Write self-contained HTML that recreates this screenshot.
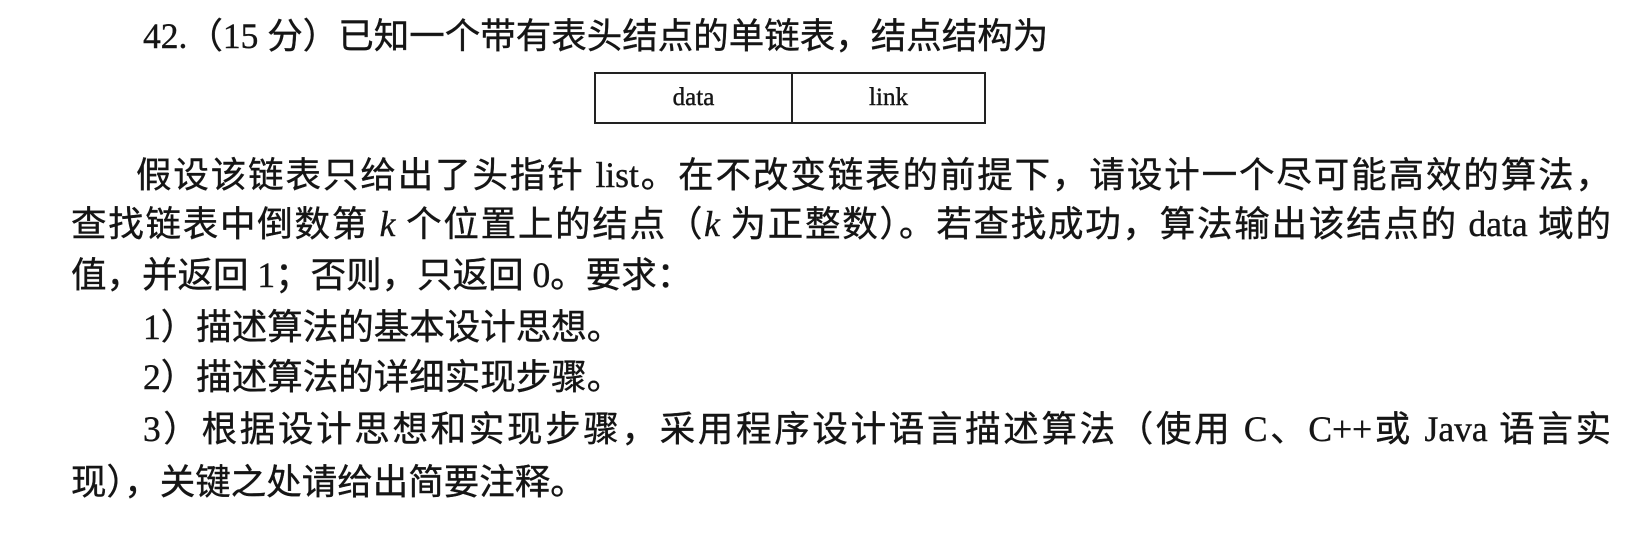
<!DOCTYPE html>
<html><head><meta charset="utf-8"><style>
body{margin:0;width:1629px;height:541px;background:#fff;position:relative;overflow:hidden;color:#151515}
.l{position:absolute;white-space:nowrap;font-family:"Liberation Serif","Noto Sans CJK SC",serif;font-size:35.5px;line-height:44px;height:44px;-webkit-text-stroke:0.4px #151515}
.j{text-align:justify;text-align-last:justify}
.box{position:absolute;top:72px;height:52px;border:2px solid #222;box-sizing:border-box;font-family:"Liberation Serif",serif;font-size:25px;line-height:48px;text-align:center;-webkit-text-stroke:0.4px #151515}
</style></head><body>
<div class="l" style="left:143px;top:14px">42.（15 分）已知一个带有表头结点的单链表，结点结构为</div>
<div class="box" style="left:594px;width:199px">data</div>
<div class="box" style="left:791px;width:195px">link</div>
<div class="l j" style="left:136px;top:153px;width:1475px">假设该链表只给出了头指针 list。在不改变链表的前提下，请设计一个尽可能高效的算法，</div>
<div class="l j" style="left:71px;top:202px;width:1540px">查找链表中倒数第 <i>k</i> 个位置上的结点（<i>k</i> 为正整数）。若查找成功，算法输出该结点的 data 域的</div>
<div class="l" style="left:71px;top:253px">值，并返回 1；否则，只返回 0。要求：</div>
<div class="l" style="left:143px;top:305px">1）描述算法的基本设计思想。</div>
<div class="l" style="left:143px;top:355px">2）描述算法的详细实现步骤。</div>
<div class="l j" style="left:143px;top:407px;width:1468px">3）根据设计思想和实现步骤，采用程序设计语言描述算法（使用 C、C++或 Java 语言实</div>
<div class="l" style="left:71px;top:460px">现），关键之处请给出简要注释。</div>
</body></html>
